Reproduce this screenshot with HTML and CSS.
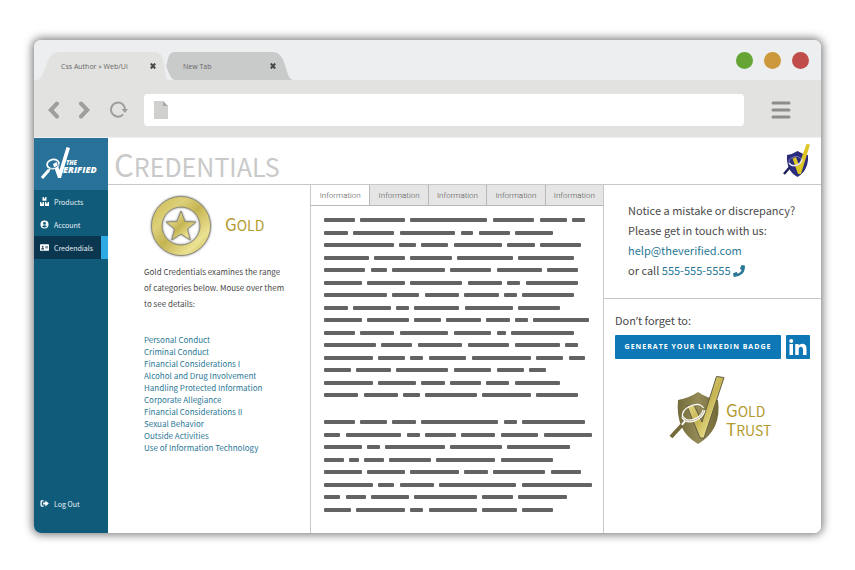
FILE: index.html
```html
<!DOCTYPE html>
<html lang="en">
<head>
<meta charset="utf-8">
<title>Credentials</title>
<link rel="stylesheet" href="styles.css">
</head>
<body>
<div class="window">
  <div class="titlebar">
    <div class="tab tab-active">
      <svg class="tab-shape" viewBox="0 0 132 28" preserveAspectRatio="none" aria-hidden="true"><path d="M0 28C8 27 9 3 18 1Q19 0 22 0H118C131 0 125 27 132 28Z"/></svg>
      <span class="tab-label">Css Author » Web/Ui</span>
      <button class="tab-close" aria-label="Close tab"><svg viewBox="0 0 6 6"><path d="M.8.5L5.2 5.5M5.2.5L.8 5.5"/></svg></button>
    </div>
    <div class="tab tab-idle">
      <svg class="tab-shape" viewBox="0 0 127 28" preserveAspectRatio="none" aria-hidden="true"><path d="M6 0H106C122 0 118 26 127 28H10C4 28 3 20 0 14C2 9 2 0 8 0Z"/></svg>
      <span class="tab-label">New Tab</span>
      <button class="tab-close" aria-label="Close tab"><svg viewBox="0 0 6 6"><path d="M.8.5L5.2 5.5M5.2.5L.8 5.5"/></svg></button>
    </div>
    <div class="lights"><i class="green"></i><i class="amber"></i><i class="red"></i></div>
  </div>
  <div class="toolbar">
    <button class="nav" aria-label="Back"><svg width="12" height="18" viewBox="0 0 12 18"><path d="M9 2.500L2.800 9L9 15.500"/></svg></button>
    <button class="nav" aria-label="Forward"><svg width="12" height="18" viewBox="0 0 12 18"><path d="M3 2.500L9.200 9L3 15.500"/></svg></button>
    <button class="nav reload" aria-label="Reload"><svg width="18" height="18" viewBox="0 0 18 18"><path d="M12.500 14A7 7 0 1 1 15 9"/><path class="solid" d="M11.500 8H18l-3 4z"/></svg></button>
    <div class="address">
      <svg width="14" height="18" viewBox="0 0 14 18" aria-hidden="true"><path fill="#d0d0ce" d="M0 0h9l5 5v13H0z"/><path fill="#a9aba9" d="M9 0l5 5H9z"/></svg>
      <input type="text" aria-label="Address">
    </div>
    <button class="menu" aria-label="Menu"><svg width="20" height="18" viewBox="0 0 20 18"><path d="M2 2h16M2 9h16M2 16h16"/></svg></button>
  </div>
  <div class="app">
    <aside class="sidebar">
      <a class="brand" href="#" aria-label="The Verified">
        <svg width="62" height="34" viewBox="0 0 62 34">
          <path fill="#fff" d="M25.500 0L29 1 20 31H17L12 17L15.500 15L18.500 23Z"/>
          <g transform="rotate(-12 12 17)"><ellipse cx="12" cy="17" rx="6" ry="4.500" fill="none" stroke="#fff" stroke-width="1.800"/></g>
          <path stroke="#fff" stroke-width="3" d="M1 31L8 23"/>
          <path stroke="#fff" stroke-width="1.300" d="M7 24l3-3"/>
          <path stroke="#287198" stroke-width=".8" fill="none" d="M9 21q5 1 10-4"/>
          <text class="brand-small" x="25" y="18">THE</text>
          <text class="brand-large" x="22" y="26">ERIFIED</text>
        </svg>
      </a>
      <nav class="side-nav">
        <a href="#"><svg viewBox="0 0 10 10"><path d="M2.800 0h1.500v1.800h1.400V0h1.500v4.300H2.800zM0 5.500h1.500v1.800h1.400V5.500h1.600V10H0zM5.500 5.500H7v1.800h1.400V5.500H10V10H5.500z"/></svg>Products</a>
        <a href="#"><svg viewBox="0 0 10 10"><path fill-rule="evenodd" d="M5 .5a4.500 4.500 0 1 0 0 9a4.500 4.500 0 1 0 0-9zM5 2.200a1.600 1.600 0 1 1 0 3.200a1.600 1.600 0 1 1 0-3.200zM2.300 7Q3.300 5.900 5 5.900T7.700 7Q6.500 8.400 5 8.400T2.300 7z"/></svg>Account</a>
        <a href="#" class="current"><svg viewBox="0 0 10 10"><path fill-rule="evenodd" d="M.5 1.500h9q.5 0 .5.500v6q0 .5-.5.500h-9Q0 8.500 0 8V2q0-.5.500-.5zM3 3.200a1 1 0 1 0 0 2a1 1 0 1 0 0-2zM1.400 7.100h3.200Q4.600 5.600 3 5.600T1.400 7.100zM5.800 3.500v.7H9v-.7zM5.800 5v.7H9V5z"/></svg>Credendials</a>
        <a href="#" class="logout"><svg viewBox="0 0 10 10"><path d="M4 1.500H2Q.5 1.500.5 3v4Q.5 8.500 2 8.500h2V7.200H2V2.800h2zM6 1.800v2H3.500v2.400H6v2L9.800 5z"/></svg>Log Out</a>
      </nav>
    </aside>
    <main class="main">
      <header class="page-head">
        <h1 class="caps">Credentials</h1>
        <svg width="28" height="36" viewBox="0 0 28 36" role="img" aria-label="The Verified shield">
          <path fill="#2b2c7c" d="M4 12Q10 11 14.500 8Q19 11 25 12Q26 27 14.500 34Q3 28 4 12z"/>
          <path fill="#dcc525" d="M23.500 1L27 1.500 18 31H15L9.500 15.500L13 14L16 22z"/>
          <path fill="none" stroke="#e4e6f5" stroke-width="1.500" d="M6 20q3 4 8 2t5-6"/>
          <path fill="none" stroke="#8d90c4" stroke-width=".8" d="M6 20q-1-4 4-6t9 2"/>
          <path stroke="#1f2058" stroke-width="2.500" d="M1 31L7 24"/>
        </svg>
      </header>
      <div class="columns">
        <section class="level">
          <div class="level-head">
            <svg width="66" height="66" viewBox="0 0 66 66" role="img" aria-label="Gold medal">
              <defs><linearGradient id="gold" x1="0" y1="0" x2="1" y2="1"><stop offset="0" stop-color="#c9b74c"/><stop offset=".3" stop-color="#ddd07a"/><stop offset=".5" stop-color="#c5b452"/><stop offset=".78" stop-color="#ece293"/><stop offset="1" stop-color="#b9a741"/></linearGradient></defs>
              <g class="medal"><path fill="url(#gold)" fill-rule="evenodd" stroke="#8d8c78" d="M33 3.500a29.500 29.500 0 1 0 0 59a29.500 29.500 0 1 0 0-59zM33 14a19 19 0 1 1 0 38a19 19 0 1 1 0-38z"/>
              <path fill="url(#gold)" stroke="#8d8c78" d="M33 18l4 10.500 11 .5-8.700 7 3 11L33 41l-9.300 6 3-11L18 29l11-.5z"/></g>
            </svg>
            <h2 class="caps">Gold</h2>
          </div>
          <p class="intro">Gold Credentials examines the range of categories below. Mouse over them to see details:</p>
          <ul class="categories">
            <li><a href="#">Personal Conduct</a></li>
            <li><a href="#">Criminal Conduct</a></li>
            <li><a href="#">Financial Considerations I</a></li>
            <li><a href="#">Alcohol and Drug Involvement</a></li>
            <li><a href="#">Handling Protected Information</a></li>
            <li><a href="#">Corporate Allegiance</a></li>
            <li><a href="#">Financial Considerations II</a></li>
            <li><a href="#">Sexual Behavior</a></li>
            <li><a href="#">Outside Activities</a></li>
            <li><a href="#">Use of Information Technology</a></li>
          </ul>
        </section>
        <section class="details">
          <div class="info-tabs">
            <button class="selected">Information</button><button>Information</button><button>Information</button><button>Information</button><button>Information</button>
          </div>
          <div class="copy" id="copy"></div>
        </section>
        <section class="aside">
          <div class="contact">
            <p>Notice a mistake or discrepancy?</p>
            <p>Please get in touch with us:</p>
            <p><a href="#">help@theverified.com</a></p>
            <p>or call <a href="#">555-555-5555 <svg width="12" height="12" viewBox="0 0 12 12" aria-hidden="true"><path d="M9 0l2.600.6q.4.100.4.600Q11.800 6.500 9 9T1.200 12q-.5 0-.6-.4L0 9q-.1-.5.400-.7l2.800-1.200q.4-.2.700.200l1.100 1.400Q7.700 7.500 8.700 5L7.300 3.900q-.4-.3-.2-.700L8.300.4Q8.500 0 9 0z"/></svg></a></p>
          </div>
          <div class="badge">
            <p>Don<span class="apostrophe">’</span>t forget to:</p>
            <div class="linkedin">
              <button class="generate">GENERATE YOUR LINKEDIN BADGE</button>
              <a href="#" aria-label="LinkedIn"><svg width="24" height="24" viewBox="0 0 24 24"><rect width="24" height="24" rx="1" fill="#0d78b5"/><path fill="#fff" d="M3.500 9H7v11H3.500zM5.200 4a2 2 0 1 1 0 4a2 2 0 1 1 0-4zM9.200 9h3.400v1.500q1.200-1.800 3.500-1.800 4.400 0 4.400 5V20H17v-5.600q0-2.700-2-2.700-2.300 0-2.300 2.800V20H9.200z"/></svg></a>
            </div>
            <div class="trust">
              <svg width="56" height="70" viewBox="0 0 56 70" role="img" aria-label="Gold shield">
                <defs><linearGradient id="shield"><stop offset="0" stop-color="#736b3b"/><stop offset=".5" stop-color="#958b58"/><stop offset="1" stop-color="#706835"/></linearGradient></defs>
                <path fill="url(#shield)" d="M9 25Q20 23 29 17Q38 23 49 25Q53 55 29 69Q6 56 9 25z"/>
                <path fill="url(#gold)" stroke="#635e43" d="M47.500 1.500L55 2.500 35 63H31L18 31L25 30L33 47z"/>
                <path fill="none" stroke="#fff" stroke-width="3" d="M13.500 42q4 6 12 3t9.500-10"/>
                <path fill="none" stroke="#8a8152" stroke-width=".6" d="M13.500 42q4 6 12 3t9.500-10"/>
                <path fill="none" stroke="#fff" stroke-width="1.300" d="M13.500 42q-1-7 8-11t13 2"/>
                <path stroke="#fff" stroke-width="2" d="M12 51l4-5"/><path stroke="#746b3b" stroke-width="4" d="M2 62L13 50"/>
              </svg>
              <h2><span class="caps">Gold</span><span class="caps">Trust</span></h2>
            </div>
          </div>
        </section>
      </div>
    </main>
  </div>
</div>
<script src="lines.js"></script>
</body>
</html>
```
FILE: styles.css
```css
* { box-sizing: border-box; }
body {
  margin: 0;
  padding: 40px 34px 37px;
  background: #fff;
  color: #4a4a4a;
  font-family: "Noto Sans CJK SC", "Noto Sans", sans-serif;
  font-size: 8px;
}
h1, h2, p, ul { margin: 0; padding: 0; font-weight: 400; }
ul { list-style: none; }
a { color: #2a7896; text-decoration: none; }
button { border: 0; padding: 0; background: none; font: inherit; color: inherit; }
svg { display: block; flex: none; }

.window {
  display: flex;
  flex-direction: column;
  min-height: calc(100vh - 77px);
  border-radius: 7px;
  overflow: hidden;
  box-shadow: 0 0 8px 2px rgba(0, 0, 0, .5);
}
.titlebar {
  display: flex;
  align-items: flex-end;
  height: 40px;
  padding: 0 12px 0 3px;
  background: #edeef0;
}
.tab {
  position: relative;
  display: flex;
  align-items: center;
  justify-content: space-between;
  height: 28px;
  font-family: "Open Sans", "Noto Sans", sans-serif;
  font-size: 7px;
  color: #686868;
}
.tab-active { width: 132px; padding: 0 13px 0 24px; }
.tab-idle { width: 127px; padding: 0 17px 0 17px; margin-left: -3px; }
.tab-shape { position: absolute; inset: 0; width: 100%; height: 100%; fill: #e2e2e0; }
.tab-idle .tab-shape { fill: #c9cbca; }
.tab-label, .tab-close { position: relative; }
.tab-close svg { width: 6px; height: 6px; stroke: #484848; stroke-width: 2; }
.lights { display: flex; gap: 11px; align-self: center; margin-left: auto; }
.lights i { width: 17px; height: 17px; border-radius: 50%; }
.green { background: #64a536; }
.amber { background: #cc983b; }
.red { background: #c04d49; }

.toolbar {
  display: flex;
  align-items: center;
  height: 58px;
  padding: 2px 30px 0 14px;
  border-bottom: 1px solid #f0f0f0;
  background: #e2e2e0;
}
.nav { margin-right: 18px; }
.nav svg { fill: none; stroke: #9d9f9d; stroke-width: 4; stroke-linecap: round; }
.reload svg { stroke-width: 2; }
.reload .solid { fill: #9d9f9d; stroke: none; }
.nav.reload { margin: 0 16px 0 2px; }
.address {
  display: flex;
  flex: 1;
  align-items: center;
  height: 32px;
  padding: 0 10px;
  border-radius: 4px;
  background: #fff;
}
.address input { flex: 1; min-width: 0; border: 0; outline: 0; background: none; }
.menu { margin-left: 27px; }
.menu svg { stroke: #8b8d8b; stroke-width: 3; stroke-linecap: round; }

.app { display: flex; flex: 1; background: #fff; }
.sidebar { display: flex; flex-direction: column; width: 74px; background: #105b7a; }
.brand { height: 52px; padding: 9px 0 0 7px; background: #287198; }
.brand text { fill: #fff; font-family: "Open Sans", sans-serif; font-weight: 800; font-style: italic; }
.brand-small { font-size: 6px; }
.brand-large { font-size: 9px; }
.side-nav { display: flex; flex: 1; flex-direction: column; }
.side-nav a {
  display: flex;
  align-items: center;
  gap: 5px;
  height: 23px;
  padding-left: 6px;
  color: #e8f1f5;
  font-size: 7px;
}
.side-nav svg { width: 9px; height: 9px; fill: #fff; }
.side-nav .current { border-right: 7px solid #2daae1; background: #0b3650; }
.side-nav .logout { margin: auto 0 18px; }

.main { display: flex; flex: 1; flex-direction: column; min-width: 0; }
.page-head {
  display: flex;
  align-items: center;
  justify-content: space-between;
  height: 47px;
  padding: 0 10px 0 6px;
  border-bottom: 1px solid #c8c8c8;
}
.caps { display: block; text-transform: uppercase; }
h1.caps { padding-top: 8px; color: #c9c9c9; font-size: 25px; line-height: 36px; }
h1.caps::first-letter { font-size: 31px; }
h2 { color: #b39b2f; font-size: 14px; line-height: 17px; }
h2.caps::first-letter, h2 .caps::first-letter { font-size: 17px; }
.columns { display: grid; flex: 1; grid-template-columns: 202fr 294fr 217fr; }

.level { padding: 8px 25px 0 36px; }
.level-head { display: flex; align-items: center; gap: 11px; padding-left: 4px; }
.level-head h2 { padding-bottom: 3px; }
.medal { filter: drop-shadow(0 0 1px rgba(0, 0, 0, .5)); }
.intro { margin-top: 5px; line-height: 16px; }
.categories { margin-top: 22px; line-height: 12px; }

.details { border: solid #c8c8c8; border-width: 0 1px; }
.info-tabs { display: grid; grid-template-columns: repeat(5, 1fr); height: 21px; }
.info-tabs button {
  border-bottom: 1px solid #b8b8b8;
  border-left: 1px solid #b8b8b8;
  background: #e5e5e5;
  color: #555;
  font-family: Roboto, sans-serif;
  font-weight: 300;
}
.info-tabs .selected { border-left: 0; background: #fff; }
.copy { padding: 12px 11px 0 13px; }
.para { display: flex; flex-direction: column; justify-content: space-between; height: 179px; }
.para + .para { height: 92px; margin-top: 23px; }
.line { display: flex; gap: 2%; height: 4px; }
.line span { flex: none; border-radius: 1px; background: #636363; }

.contact { padding: 15px 0 18px 24px; border-bottom: 1px solid #c8c8c8; font-size: 11px; line-height: 20px; }
.contact p, .badge p { white-space: nowrap; }
.contact svg { display: inline-block; fill: #2a7896; vertical-align: -2px; }
.badge { padding: 11px 11px 0; font-size: 11px; line-height: 20px; }
.apostrophe { font-family: "Noto Sans", sans-serif; }
.linkedin { display: flex; gap: 5px; margin-top: 4px; }
.generate {
  flex: 1;
  height: 24px;
  border-radius: 1px;
  background: #0d78b5;
  color: #fff;
  font-family: "Open Sans", sans-serif;
  font-size: 7px;
  font-weight: 700;
  letter-spacing: 1px;
  white-space: nowrap;
}
.trust { display: flex; align-items: center; gap: 1px; margin: 16px 0 0 54px; }
.trust h2 { padding-top: 19px; }
```
FILE: lines.js
```js
// Word lengths, in characters, for each placeholder line.
const paragraphs = [
  ["8 12 21 11 7 3", "6 11 15 3 8 10", "19 4 7 13 7 11", "12 8 11 15 15", "11 4 14 11 12 8",
   "10 10 14 9 3 14", "17 7 9 9 3 14", "6 10 3 12 13 11", "10 11 7 9 6 3 15", "8 9 13 10 2 17",
   "14 8 12 11 12 3", "13 7 3 10 16 7 4", "7 9 14 10 7 4", "13 10 6 8 6 12", "9 9 4 14 13 11"],
  ["8 7 6 21 3 17", "4 15 3 8 9 10 13", "10 3 16 14 17", "5 2 5 11 16 14",
   "10 10 13 6 14 8", "13 4 9 21 19", "4 5 10 17 8 13", "7 13 3 13 9 8"]
];
const copy = document.getElementById("copy");
for (const lines of paragraphs) {
  const para = copy.appendChild(document.createElement("div"));
  para.className = "para";
  for (const words of lines) {
    const line = para.appendChild(document.createElement("div"));
    line.className = "line";
    for (const n of words.split(" ")) {
      line.appendChild(document.createElement("span")).style.width = (n * 4 + 2.34) / 3 + "%";
    }
  }
}
```
